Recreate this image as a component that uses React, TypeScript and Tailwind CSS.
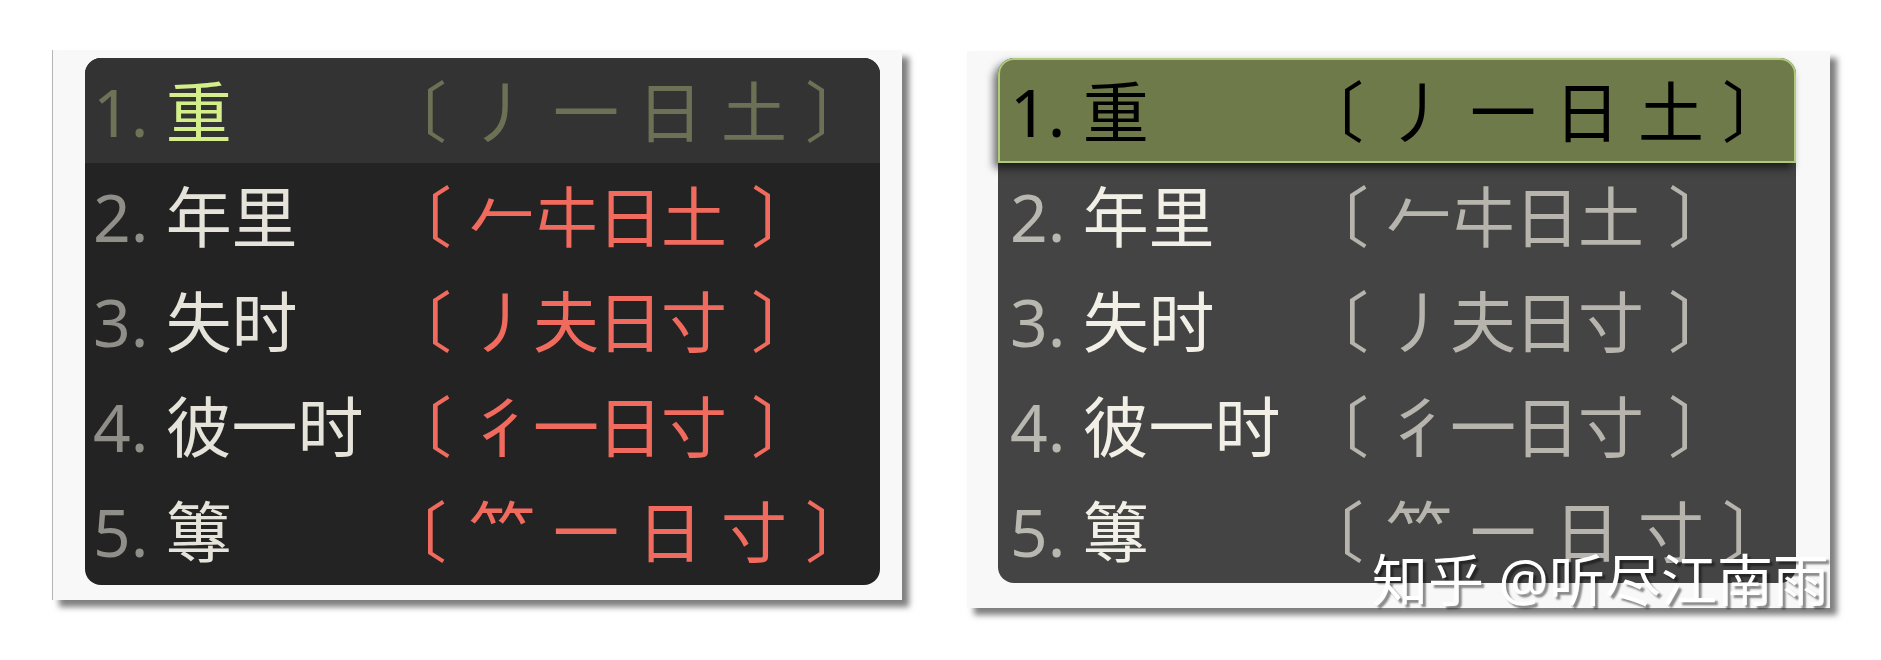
import React from "react";

type Row = { n: string; cand: string; code: string[]; wide: boolean };

const rows: Row[] = [
  { n: "1", cand: "重", code: ["丿", "一", "日", "土"], wide: true },
  { n: "2", cand: "年里", code: ["𠂉", "㐄", "日", "土"], wide: false },
  { n: "3", cand: "失时", code: ["丿", "夫", "日", "寸"], wide: false },
  { n: "4", cand: "彼一时", code: ["彳", "一", "日", "寸"], wide: false },
  { n: "5", cand: "篿", code: ["⺮", "一", "日", "寸"], wide: true },
];

const font = "[font-family:'Noto_Sans','Noto_Sans_CJK_SC',sans-serif]";

const Code = ({ code, wide }: { code: string[]; wide: boolean }) => (
  <div className="flex items-center">
    <span className={`${wide ? "w-[54px]" : "w-[64px]"} pr-[38px] flex justify-center`}>〔</span>
    {code.map((c, i) => (
      <span key={i} className={`${wide ? "w-[84px]" : "w-[64px]"} flex justify-center`}>
        {c}
      </span>
    ))}
    <span className={`${wide ? "w-[50px] pl-[34px]" : "w-[64px] pl-[52px]"} flex justify-center`}>〕</span>
  </div>
);

const DarkPanel = () => (
  <div className="ml-[32px] mt-[8px] w-[795px] h-[527px] rounded-[16px] overflow-hidden bg-[#232323] flex flex-col">
    {rows.map((r, i) => {
      const first = i === 0;
      return (
        <div
          key={r.n}
          className={`h-[105px] flex items-center pl-[8px] leading-none text-[66px] ${
            first ? "bg-[#333333]" : ""
          }`}
        >
          <div className="w-[313px] flex items-center whitespace-pre">
            <span className={first ? "text-[#6e7257]" : "text-[#8f8e89]"}>{r.n}. </span>
            <span className={first ? "text-[#d4ef8a]" : "text-[#e6e4da]"}>{r.cand}</span>
          </div>
          <div className={first ? "text-[#6c7156]" : "text-[#f06a5d]"}>
            <Code code={r.code} wide={r.wide} />
          </div>
        </div>
      );
    })}
  </div>
);

const GrayPanel = () => (
  <div className="ml-[31px] mt-[7px] w-[798px] h-[525px] rounded-[16px] bg-[#444444] flex flex-col">
    {rows.map((r, i) => {
      const first = i === 0;
      return (
        <div
          key={r.n}
          className={`h-[105px] flex items-center leading-none text-[66px] ${
            first
              ? "relative z-10 bg-[#6e7a4a] border-2 border-[#aecb7b] rounded-t-[16px] shadow-[-4px_5px_8px_rgba(0,0,0,0.6)] pl-[10px]"
              : "pl-[12px]"
          }`}
        >
          <div className="w-[313px] flex items-center whitespace-pre">
            <span className={first ? "text-black" : "text-[#b8b7b0]"}>{r.n}. </span>
            <span className={first ? "text-black" : "text-[#f2f0e6]"}>{r.cand}</span>
          </div>
          <div className={first ? "text-black" : "text-[#b6b4ad]"}>
            <Code code={r.code} wide={r.wide} />
          </div>
        </div>
      );
    })}
  </div>
);

export default function App() {
  return (
    <div className={`relative w-[1881px] h-[660px] bg-white overflow-hidden ${font}`}>
      <div className="flex items-start pl-[52px] pt-[50px] gap-[65px]">
        <div className="w-[850px] h-[550px] bg-[#f8f8f8] border-l border-[#b5b5b5] shadow-[7px_7px_6px_rgba(0,0,0,0.5)]">
          <DarkPanel />
        </div>
        <div className="mt-[1px] w-[863px] h-[557px] bg-[#f8f8f8] shadow-[7px_7px_6px_rgba(0,0,0,0.5)]">
          <GrayPanel />
        </div>
      </div>
      <div className="absolute left-[1372px] top-[551px] text-[56px] leading-none text-white whitespace-pre [text-shadow:3px_3px_2px_rgba(0,0,0,0.45)]">
        知乎 @听尽江南雨
      </div>
    </div>
  );
}
